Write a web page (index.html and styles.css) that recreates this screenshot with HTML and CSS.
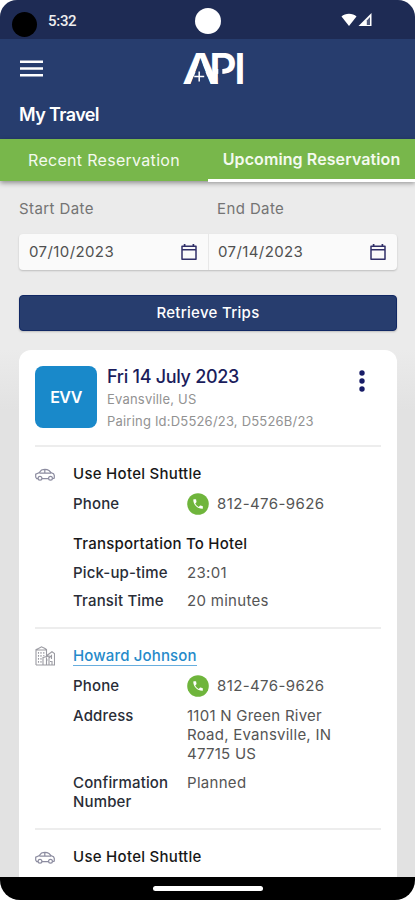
FILE: index.html
```html
<!DOCTYPE html>
<html lang="en">
<head>
<meta charset="utf-8">
<title>My Travel</title>
<link rel="stylesheet" href="styles.css">
</head>
<body>
<svg class="defs" width="0" height="0" aria-hidden="true">
  <symbol id="calendar" viewBox="0 0 18 18"><path d="M2 3.2h14v13H2z M2 6.700h14" fill="none" stroke="currentColor" stroke-width="1.5" stroke-linejoin="round"/><path d="M4.600 1v2.500M13.400 1v2.500" stroke="currentColor" stroke-width="1.700"/></symbol>
  <symbol id="car" viewBox="0 0 20 13"><g fill="none" stroke="currentColor" stroke-width="1.200"><path d="M3 10.700H1.700L.7 9V6.200L4 4.800 6.500 2C9 1 12 1.200 14 2.500L16.300 4.800 18.500 5.700 19.300 7.500V10L17.600 10.700M7 10.700h6.500M4.500 5.200h11.500M9.800 1.500v3.500"/><circle cx="5" cy="10.300" r="1.900"/><circle cx="15.500" cy="10.300" r="1.900"/></g></symbol>
  <symbol id="hotel" viewBox="0 0 20 20"><g fill="none" stroke="currentColor" stroke-width="1.100"><path d="M1 19V3.500L3.500 2.500 6.500 .8 10 2.500 11.500 3.500V19M1 19h18.500V7.500L17 5.700l-5.500 4M1 4h10M8 19v-7.500l6-1.500v9M14 12l2.500-2.500v3.500M17 19v-4"/><path d="M3.500 6v11M6 6v11M8.800 6v4M11 14h2M15 15.500h3" stroke-dasharray="1.700 1.300"/></g></symbol>
  <symbol id="phone" viewBox="0 0 22 22"><circle cx="11" cy="11" r="10.800" fill="#6fb53c"/><path transform="translate(4.700 4.700) scale(.53)" fill="#fff" d="M6.620 10.790c1.440 2.830 3.760 5.140 6.590 6.590l2.200-2.200c.27-.27.67-.36 1.020-.24 1.120.37 2.330.57 3.570.57.550 0 1 .45 1 1V20c0 .55-.45 1-1 1C10.610 21 3 13.390 3 4c0-.55.450-1 1-1h3.500c.55 0 1 .45 1 1 0 1.250.2 2.450.57 3.570.11.35.03.74-.25 1.020z"/></symbol>
</svg>
<div class="screen">
  <div class="status">
    <span class="camera"></span>
    <span class="time">5:32</span>
    <span class="punch"></span>
    <svg class="signals" width="32" height="16" viewBox="0 0 32 16"><path d="M.5 4.500C4 .8 12 .8 15.500 4.500L8 14z" fill="#fff"/><path d="M30.500 1v13H17.500z" fill="#fff"/><path d="M25.800 8.500 29 5v8h-3.200z" fill="#515b7c"/></svg>
  </div>
  <header class="header">
    <div class="bar">
      <svg class="menu" width="23" height="17" viewBox="0 0 23 17"><path d="M0 1.700h23M0 8.500h23M0 15.300h23" stroke="#fff" stroke-width="2.600"/></svg>
      <svg class="logo" width="64" height="34" viewBox="0 0 64 34">
        <text class="logo-text" y="32.500" x="-1" textLength="37" lengthAdjust="spacingAndGlyphs">A</text>
        <path class="logo-cut" d="M17.500 8 L27.500 34h-20z"/>
        <text class="logo-text" y="32.500" x="26">P</text>
        <path class="logo-cut" d="M35.300 17.500h4v9h-4z"/>
        <text class="logo-text" y="32.500" x="51">I</text>
        <path d="M16.200 20.500v10M11.200 25.500h10" stroke="#fff" stroke-width="1.500"/>
      </svg>
    </div>
    <h1 class="title">My Travel</h1>
  </header>
  <nav class="tabs">
    <span class="tab recent">Recent Reservation</span>
    <span class="tab active">Upcoming Reservation</span>
  </nav>
  <main class="content">
    <div class="labels"><span>Start Date</span><span>End Date</span></div>
    <div class="dates">
      <div class="date">07/10/2023<svg width="18" height="18"><use href="#calendar"/></svg></div>
      <div class="date end">07/14/2023<svg width="18" height="18"><use href="#calendar"/></svg></div>
    </div>
    <button class="retrieve">Retrieve Trips</button>
    <div class="trips">
    <article class="card">
      <div class="summary">
        <div class="code">EVV</div>
        <div class="info">
          <h2 class="day">Fri 14 July 2023</h2>
          <div class="meta city">Evansville, US</div>
          <div class="meta pairing">Pairing Id:D5526/23, D5526B/23</div>
        </div>
        <svg class="more" width="6" height="22" viewBox="0 0 6 22"><g fill="#171c67"><circle cx="3" cy="3" r="2.700"/><circle cx="3" cy="11" r="2.700"/><circle cx="3" cy="19" r="2.700"/></g></svg>
      </div>
      <section class="section">
        <svg class="icon car" width="20" height="13"><use href="#car"/></svg>
        <div class="details">
          <h3 class="name">Use Hotel Shuttle</h3>
          <div class="row call"><span class="key">Phone</span><span class="val number"><svg width="22" height="22"><use href="#phone"/></svg>812-476-9626</span></div>
          <h3 class="name transport">Transportation To Hotel</h3>
          <div class="row"><span class="key pickup">Pick-up-time</span><span class="val">23:01</span></div>
          <div class="row"><span class="key">Transit Time</span><span class="val">20 minutes</span></div>
        </div>
      </section>
      <section class="section hotel">
        <svg class="icon building" width="20" height="20"><use href="#hotel"/></svg>
        <div class="details">
          <h3 class="name"><a class="link">Howard Johnson</a></h3>
          <div class="row call"><span class="key">Phone</span><span class="val number"><svg width="22" height="22"><use href="#phone"/></svg>812-476-9626</span></div>
          <div class="row address"><span class="key">Address</span><span class="val">1101 N Green River<br>Road, Evansville, IN<br>47715 US</span></div>
          <div class="row"><span class="key">Confirmation<br>Number</span><span class="val">Planned</span></div>
        </div>
      </section>
      <section class="section">
        <svg class="icon car" width="20" height="13"><use href="#car"/></svg>
        <div class="details"><h3 class="name">Use Hotel Shuttle</h3></div>
      </section>
    </article>
    </div>
  </main>
  <footer class="gesture"><span class="handle"></span></footer>
</div>
</body>
</html>
```
FILE: styles.css
```css
* { box-sizing: border-box; }
body { margin: 0; background: #fff; font-family: Inter, "Liberation Sans", sans-serif; font-size: 15px; }
h1, h2, h3 { margin: 0; font-weight: 500; }
svg { display: block; flex: none; }
.defs { position: absolute; }
.screen { width: 415px; height: 900px; display: flex; flex-direction: column; overflow: hidden; border-radius: 17px 17px 20px 20px; background: #ebebeb; }

.status { height: 39px; flex: none; display: flex; align-items: center; background: #1e2b54; padding: 3px 42px 0 12px; }
.camera { width: 25px; height: 25px; border-radius: 50%; background: #000; margin-top: 7px; }
.time { font: 500 15px/18px Roboto, sans-serif; letter-spacing: -.3px; color: #eee; margin-left: 11px; width: 147px; }
.punch { width: 26px; height: 26px; border-radius: 50%; background: #fff; }
.signals { margin-left: auto; margin-top: -2px; }

.header { height: 100px; flex: none; background: #273d6e; color: #fff; padding: 13px 19px 0; }
.bar { height: 34px; display: flex; align-items: center; }
.menu { margin-left: 1px; margin-top: -2px; }
.logo { margin-left: 140px; margin-top: -2px; overflow: visible; }
.logo-text { font: 600 43px Inter, sans-serif; fill: #fff; }
.logo-cut { fill: #273d6e; }
.title { font-size: 18px; line-height: 24px; font-weight: 600; letter-spacing: -.6px; margin-top: 17px; }

.tabs { height: 42px; flex: none; display: grid; grid-template-columns: 208px 207px; background: #78b74b; box-shadow: 0 2px 5px rgba(0,0,0,.4); z-index: 1; color: #f4faef; font-size: 16px; }
.tab { text-align: center; line-height: 42px; white-space: nowrap; letter-spacing: .3px; }
.active { line-height: 40px; font-weight: 600; border-bottom: 3px solid #fff; letter-spacing: .1px; }

.content { flex: 1; min-height: 0; }
.labels { display: grid; grid-template-columns: 198px 1fr; margin: 18px 19px 0; line-height: 20px; color: #747474; letter-spacing: .4px; }
.dates { display: grid; grid-template-columns: 189px 189px; width: 378px; height: 36px; margin: 15px 19px 0 19px; background: #fafafa; border-radius: 4px; box-shadow: 0 1px 2px rgba(0,0,0,.2); color: #505050; letter-spacing: .4px; line-height: 18px; }
.date { display: flex; align-items: center; justify-content: space-between; padding: 0 10px 0 10px; }
.date svg { color: #302f68; }
.end { border-left: 1px solid #e8e8e8; padding-left: 9px; }
.retrieve { display: block; width: 378px; height: 36px; margin: 25px 19px 0; padding: 0; border: 1px solid #112864; border-radius: 4px; background: #273d6e; color: #fff; font: 500 15px/34px Inter, sans-serif; letter-spacing: .3px; box-shadow: 0 1px 2px rgba(0,0,0,.2); }

.trips { margin-top: 19px; padding: 0 18px 0 19px; height: 528px; overflow: hidden; background: linear-gradient(#ebebeb, #e2e2e2 60px); }
.card { height: 540px; background: #fff; border-radius: 12px; padding: 16px 16px 0; }
.summary { display: flex; height: 79px; }
.code { width: 62px; height: 62px; border-radius: 8px; background: #1989ca; color: #fff; font-size: 16px; font-weight: 600; letter-spacing: -.5px; line-height: 62px; text-align: center; }
.info { margin-left: 10px; flex: 1; }
.day { font-size: 18px; line-height: 22px; color: #1b1d5c; letter-spacing: -.3px; }
.meta { color: #929292; font-size: 13px; line-height: 22px; white-space: nowrap; letter-spacing: .2px; }
.more { margin: 4px 16px 0 0; }

.section { display: flex; border-top: 2px solid #ededed; padding-top: 17px; height: 182px; }
.hotel { height: 201px; }
.icon { color: #8c8ca0; margin-right: 18px; }
.car { margin-top: 4px; }
.building { color: #9b9ba2; }
.details { line-height: 19px; }
.name { font-size: 15px; color: #171717; white-space: nowrap; letter-spacing: .28px; }
.row { display: grid; grid-template-columns: 114px auto; margin-top: 10px; }
.row:last-child { margin-top: 9px; }
.call { margin-top: 11px; }
.key { font-weight: 500; color: #292d37; letter-spacing: .15px; }
.val { color: #555; white-space: nowrap; letter-spacing: .3px; }
.number { display: flex; align-items: center; height: 19px; gap: 8px; letter-spacing: .4px; }
.transport { margin-top: 21px; letter-spacing: .24px; }
.address { margin-top: 11px; }
.address .val { letter-spacing: .25px; }
.address + .row:last-child { margin-top: 10px; }
.link { color: #258aca; letter-spacing: .15px; border-bottom: 1px solid #68aede; }

.gesture { height: 23px; flex: none; background: #000; display: flex; justify-content: center; padding-top: 9px; }
.handle { width: 110px; height: 5px; border-radius: 3px; background: #fff; }
```
